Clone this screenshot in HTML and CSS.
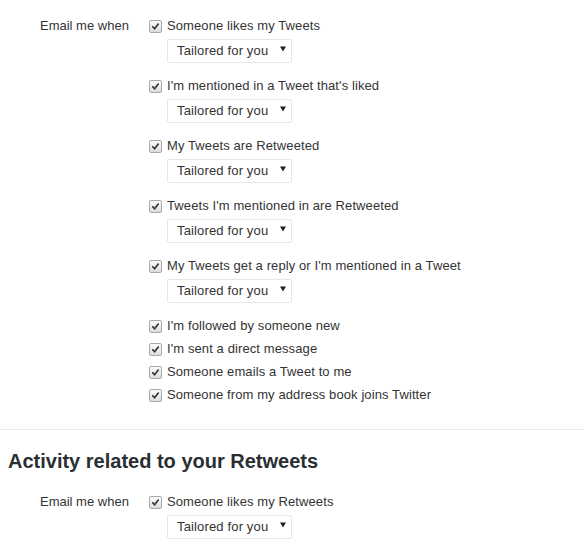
FILE: index.html
```html
<!DOCTYPE html>
<html lang="en">

<head>
    <meta charset="UTF-8">
    <title>Email notifications</title>
    <link rel="stylesheet" href="styles.css">
</head>

<body>

    <section class="settings">
        <div class="control-label">Email me when</div>
        <div class="controls">
            <div class="opt-group">
                <label class="check"><span class="box"><svg viewBox="0 0 13 13"><path d="M3.2 6.8 L5.4 9.2 L9.8 3.6" /></svg></span>Someone likes my Tweets</label>
                <div class="select">Tailored for you<svg class="caret" viewBox="0 0 7 6"><path d="M0 0 H7 L3.5 6 Z" /></svg></div>
            </div>
            <div class="opt-group">
                <label class="check"><span class="box"><svg viewBox="0 0 13 13"><path d="M3.2 6.8 L5.4 9.2 L9.8 3.6" /></svg></span>I'm mentioned in a Tweet that's liked</label>
                <div class="select">Tailored for you<svg class="caret" viewBox="0 0 7 6"><path d="M0 0 H7 L3.5 6 Z" /></svg></div>
            </div>
            <div class="opt-group">
                <label class="check"><span class="box"><svg viewBox="0 0 13 13"><path d="M3.2 6.8 L5.4 9.2 L9.8 3.6" /></svg></span>My Tweets are Retweeted</label>
                <div class="select">Tailored for you<svg class="caret" viewBox="0 0 7 6"><path d="M0 0 H7 L3.5 6 Z" /></svg></div>
            </div>
            <div class="opt-group">
                <label class="check"><span class="box"><svg viewBox="0 0 13 13"><path d="M3.2 6.8 L5.4 9.2 L9.8 3.6" /></svg></span>Tweets I'm mentioned in are Retweeted</label>
                <div class="select">Tailored for you<svg class="caret" viewBox="0 0 7 6"><path d="M0 0 H7 L3.5 6 Z" /></svg></div>
            </div>
            <div class="opt-group">
                <label class="check"><span class="box"><svg viewBox="0 0 13 13"><path d="M3.2 6.8 L5.4 9.2 L9.8 3.6" /></svg></span>My Tweets get a reply or I'm mentioned in a Tweet</label>
                <div class="select">Tailored for you<svg class="caret" viewBox="0 0 7 6"><path d="M0 0 H7 L3.5 6 Z" /></svg></div>
            </div>
            <div class="opt-list">
                <label class="check"><span class="box"><svg viewBox="0 0 13 13"><path d="M3.2 6.8 L5.4 9.2 L9.8 3.6" /></svg></span>I'm followed by someone new</label>
                <label class="check"><span class="box"><svg viewBox="0 0 13 13"><path d="M3.2 6.8 L5.4 9.2 L9.8 3.6" /></svg></span>I'm sent a direct message</label>
                <label class="check"><span class="box"><svg viewBox="0 0 13 13"><path d="M3.2 6.8 L5.4 9.2 L9.8 3.6" /></svg></span>Someone emails a Tweet to me</label>
                <label class="check"><span class="box"><svg viewBox="0 0 13 13"><path d="M3.2 6.8 L5.4 9.2 L9.8 3.6" /></svg></span>Someone from my address book joins Twitter</label>
            </div>
        </div>
    </section>

    <hr class="divider">

    <h2 class="section-title">Activity related to your Retweets</h2>

    <section class="settings">
        <div class="control-label">Email me when</div>
        <div class="controls">
            <div class="opt-group">
                <label class="check"><span class="box"><svg viewBox="0 0 13 13"><path d="M3.2 6.8 L5.4 9.2 L9.8 3.6" /></svg></span>Someone likes my Retweets</label>
                <div class="select">Tailored for you<svg class="caret" viewBox="0 0 7 6"><path d="M0 0 H7 L3.5 6 Z" /></svg></div>
            </div>
        </div>
    </section>

</body>

</html>
```

FILE: styles.css
```css
* {
    margin: 0;
    padding: 0;
    box-sizing: border-box;
}

body {
    background: #fff;
    color: #333;
    font-family: "Liberation Sans", Arial, sans-serif;
    font-size: 13px;
    line-height: 18px;
    padding-top: 17px;
}

/* 一行设置：左边是标签，右边是选项 */
.settings {
    display: grid;
    grid-template-columns: 149px 1fr;
}

.control-label {
    padding-left: 40px;
    color: #333;
}

.opt-group {
    margin-bottom: 14px;
}

.opt-list {
    display: flex;
    flex-direction: column;
    gap: 5px;
}

.divider {
    border: 0;
    border-top: 1px solid #ececec;
    margin-top: 25px;
}

.check {
    display: flex;
    align-items: center;
    gap: 5px;
    height: 18px;
    white-space: nowrap;
    letter-spacing: 0.1px;
}

/* 自己画的复选框 */
.check .box {
    width: 13px;
    height: 13px;
    border: 1px solid #a9a9a9;
    border-radius: 2px;
    background: linear-gradient(#fcfcfc, #dcdcdc);
    display: flex;
    flex: none;
}

.check .box svg {
    width: 11px;
    height: 11px;
    fill: none;
    stroke: #333;
    stroke-width: 2;
    stroke-linecap: round;
    stroke-linejoin: round;
}

/* 下拉框，和复选框文字对齐 */
.select {
    display: flex;
    align-items: center;
    justify-content: space-between;
    width: 125px;
    height: 24px;
    margin: 4px 0 0 18px;
    padding: 0 5px 0 9px;
    border: 1px solid #e6e6e6;
    border-radius: 2px;
    background: #fff;
    color: #333;
    letter-spacing: 0.15px;
}

.select .caret {
    width: 6px;
    height: 6px;
    margin-top: -4px;
    fill: #222;
}

.section-title {
    font-size: 20px;
    line-height: 24px;
    font-weight: bold;
    color: #292f33;
    padding: 19px 8px 20px;
}
```
